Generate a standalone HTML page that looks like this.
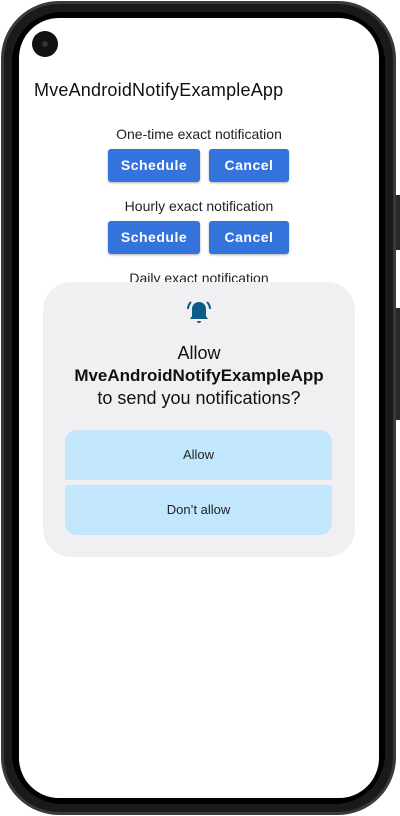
<!DOCTYPE html>
<html><head><style>
*{margin:0;padding:0;box-sizing:border-box}
body{width:400px;height:816px;background:#fff;position:relative;overflow:hidden;font-family:"Liberation Sans",sans-serif}
.frame{position:absolute;left:1px;top:1px;width:395px;height:814px;background:#1a1a1a;border-radius:58px;border:3px solid #3a3a3a}
.inner{position:absolute;left:8px;top:8px;right:8px;bottom:8px;background:#000;border-radius:50px}
.screen{position:absolute;left:19px;top:18px;width:360px;height:780px;background:#fff;border-radius:40px;overflow:hidden}
.btn1{position:absolute;left:396px;top:195px;width:4px;height:55px;background:#2a2a2a}
.btn2{position:absolute;left:396px;top:308px;width:4px;height:112px;background:#2a2a2a}
.cam{position:absolute;left:13px;top:13px;width:26px;height:26px;border-radius:50%;background:#111}
.cam:after{content:"";position:absolute;left:10px;top:10px;width:6px;height:6px;border-radius:50%;background:#333}
.t{position:absolute;color:#111}
.b{position:absolute;background:#3473dc;color:#fff;font-weight:bold;font-size:14px;letter-spacing:.5px;text-align:center;line-height:33px;height:33px;border-radius:3px;box-shadow:0 1px 2px rgba(0,0,0,.3)}
.lbl{position:absolute;width:360px;text-align:center;font-size:14px;color:#222}
.dlg{position:absolute;left:24px;top:264px;width:312px;height:275px;background:#f0f0f2;border-radius:28px}
.ab{position:absolute;left:22px;width:267px;height:50px;background:#c2e6fc;text-align:center;line-height:50px;font-size:13px;color:#222}
</style></head><body>
<div class="frame"><div class="inner"></div></div>
<div class="btn1"></div><div class="btn2"></div>
<div class="screen">
<div class="cam"></div>
<div class="t" style="left:15px;top:62px;font-size:18px;letter-spacing:.2px">MveAndroidNotifyExampleApp</div>
<div class="lbl" style="top:108px">One-time exact notification</div>
<div class="b" style="left:89px;top:131px;width:92px">Schedule</div>
<div class="b" style="left:190px;top:131px;width:80px">Cancel</div>
<div class="lbl" style="top:180px">Hourly exact notification</div>
<div class="b" style="left:89px;top:203px;width:92px">Schedule</div>
<div class="b" style="left:190px;top:203px;width:80px">Cancel</div>
<div class="lbl" style="top:252px">Daily exact notification</div>
<div class="dlg">
<svg style="position:absolute;left:143px;top:17px" width="26" height="28" viewBox="0 0 26 28"><path d="M13 3c-4 0-7 3-7 7v7l-2 3h18l-2-3v-7c0-4-3-7-7-7z" fill="#0b5c86"/><path d="M11 22h4a2 2 0 0 1-4 0z" fill="#0b5c86"/><path d="M5 3a10 10 0 0 0-3 7M21 3a10 10 0 0 1 3 7" stroke="#0b5c86" stroke-width="2" fill="none"/></svg>
<div style="position:absolute;top:60px;width:312px;text-align:center;font-size:18px;line-height:22px;color:#111">Allow<br><b style="font-size:17px">MveAndroidNotifyExampleApp</b><br>to send you notifications?</div>
<div class="ab" style="top:148px;border-radius:12px 12px 3px 3px">Allow</div>
<div class="ab" style="top:203px;border-radius:3px 3px 12px 12px">Don’t allow</div>
</div>
</div>
</body></html>
